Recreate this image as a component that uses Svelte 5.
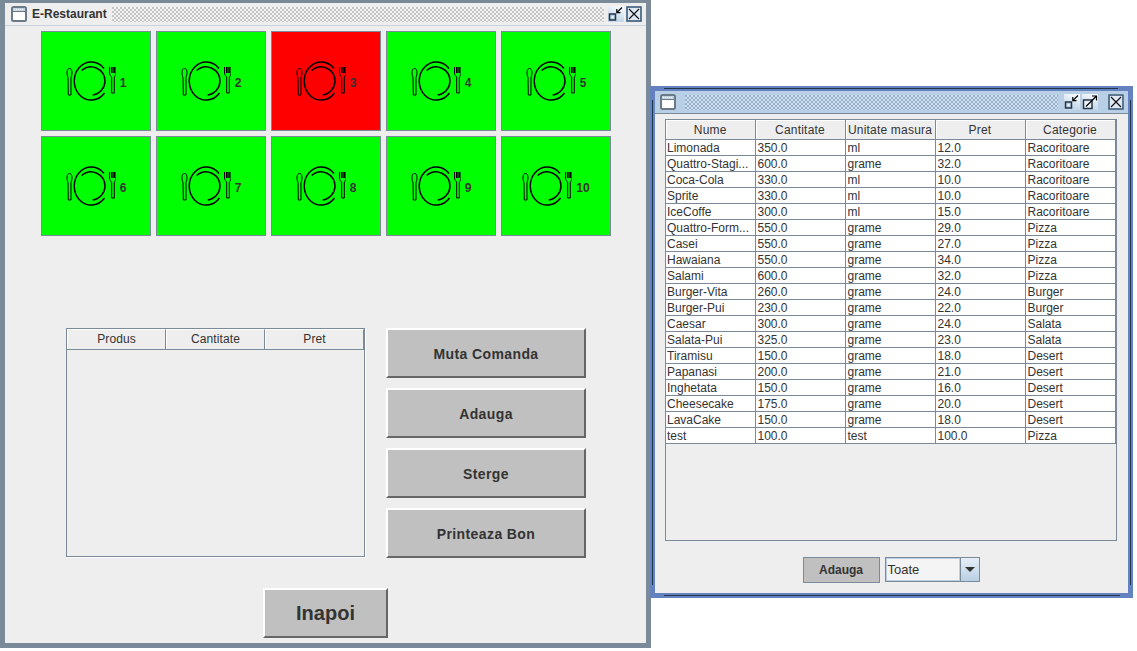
<script lang="ts">
  const tables = [1, 2, 3, 4, 5, 6, 7, 8, 9, 10];
  const busy = [3];
  const actions = ['Muta Comanda', 'Adauga', 'Sterge', 'Printeaza Bon'];
  const columns = ['Nume', 'Cantitate', 'Unitate masura', 'Pret', 'Categorie'];
  const products = [
    ['Limonada', '350.0', 'ml', '12.0', 'Racoritoare'],
    ['Quattro-Stagi...', '600.0', 'grame', '32.0', 'Racoritoare'],
    ['Coca-Cola', '330.0', 'ml', '10.0', 'Racoritoare'],
    ['Sprite', '330.0', 'ml', '10.0', 'Racoritoare'],
    ['IceCoffe', '300.0', 'ml', '15.0', 'Racoritoare'],
    ['Quattro-Form...', '550.0', 'grame', '29.0', 'Pizza'],
    ['Casei', '550.0', 'grame', '27.0', 'Pizza'],
    ['Hawaiana', '550.0', 'grame', '34.0', 'Pizza'],
    ['Salami', '600.0', 'grame', '32.0', 'Pizza'],
    ['Burger-Vita', '260.0', 'grame', '24.0', 'Burger'],
    ['Burger-Pui', '230.0', 'grame', '22.0', 'Burger'],
    ['Caesar', '300.0', 'grame', '24.0', 'Salata'],
    ['Salata-Pui', '325.0', 'grame', '23.0', 'Salata'],
    ['Tiramisu', '150.0', 'grame', '18.0', 'Desert'],
    ['Papanasi', '200.0', 'grame', '21.0', 'Desert'],
    ['Inghetata', '150.0', 'grame', '16.0', 'Desert'],
    ['Cheesecake', '175.0', 'grame', '20.0', 'Desert'],
    ['LavaCake', '150.0', 'grame', '18.0', 'Desert'],
    ['test', '100.0', 'test', '100.0', 'Pizza']
  ];
</script>

{#snippet frameIcon()}
  <svg class="frame-icon" width="16" height="16" viewBox="0 0 16 16">
    <rect x="1" y="1" width="14" height="14" rx="1.5" fill="#fff" stroke="#6b7a89" stroke-width="2" />
    <rect x="2" y="2" width="12" height="3" fill="#c4d3e2" />
    <path d="M3 3.5h1M5 3.5h1M7 3.5h1M9 3.5h1M11 3.5h1" stroke="#fff" stroke-width="1" />
    <path d="M2 5.5h12" stroke="#6b7a89" stroke-width="1" />
  </svg>
{/snippet}

{#snippet iconify()}
  <svg class="ctl" width="16" height="16" viewBox="0 0 16 16">
    <rect x="1.5" y="8" width="6" height="6" fill="#b8cfe5" stroke="#22364a" stroke-width="1.5" />
    <rect x="3.5" y="10" width="2" height="2" fill="#eef3f8" />
    <path d="M14 1.5 8.8 6.7M8.8 3v3.7h3.7" fill="none" stroke="#000" stroke-width="1.2" />
  </svg>
{/snippet}

{#snippet maximize()}
  <svg class="ctl" width="16" height="16" viewBox="0 0 16 16">
    <rect x="1.5" y="6" width="8.5" height="8.5" fill="#eef3f8" stroke="#22364a" stroke-width="1.5" />
    <path d="M4 12.5 14 2.5M10 2h4.5v4.5" fill="none" stroke="#000" stroke-width="1.2" />
  </svg>
{/snippet}

{#snippet closeBtn()}
  <svg class="ctl" width="16" height="16" viewBox="0 0 16 16">
    <rect x="1" y="1" width="14" height="14" fill="#dfe9f3" stroke="#3d5a78" stroke-width="1.6" />
    <path d="M3 3 13 13M13 3 3 13" stroke="#111" stroke-width="1.2" />
  </svg>
{/snippet}

<div class="desk">
  <section class="window main-win">
    <header class="title-bar">
      {@render frameIcon()}
      <span class="title">E-Restaurant</span>
      <span class="bumps"></span>
      <span class="controls">
        {@render iconify()}
        {@render closeBtn()}
      </span>
    </header>

    <div class="body">
      <div class="tiles">
        {#each tables as n}
          <div class="tile" class:busy={busy.includes(n)}>
            <svg width="50" height="40" viewBox="0 0 50 40" fill="none" stroke="#000">
              <path d="M38 7.5A17 19 0 1 0 38.500 32" stroke-width="1.5" />
              <path d="M15.700 9.500A14 14.300 0 0 1 39 20.500A14 14.300 0 0 1 26.700 34" stroke-width="1.5" />
              <path d="M1 12C1 8.500 2 7.500 3.500 7.500S6 8.500 6 12C6 14.500 5.200 15.700 5 16.500L5 34H2.300L2 16.500C1.800 15.700 1 14.500 1 12Z" stroke-width="1" />
              <path d="M43.500 6V12C43.500 14 45 15 45.700 16L45.700 32H48.300L48.300 16C49 15 50 14 50 12V6" stroke-width="1" />
              <path d="M45.500 6V12M47 6V12M48.500 6V12" stroke-width="1.200" />
            </svg>
            <span class="tile-no">{n}</span>
          </div>
        {/each}
      </div>

      <div class="order">
        <div class="order-table">
          <div class="order-head">
            <span>Produs</span>
            <span>Cantitate</span>
            <span>Pret</span>
          </div>
        </div>
        <div class="actions">
          {#each actions as label}
            <button class="bevel action">{label}</button>
          {/each}
        </div>
      </div>

      <button class="bevel back">Inapoi</button>
    </div>
  </section>

  <section class="window menu-win">
    <span class="edge edge-left"></span>
    <span class="edge edge-right"></span>
    <header class="title-bar">
      {@render frameIcon()}
      <span class="bumps"></span>
      <span class="controls">
        {@render iconify()}
        {@render maximize()}
        <span class="spacer"></span>
        {@render closeBtn()}
      </span>
    </header>

    <div class="body">
      <div class="grid-box">
        <table>
          <thead>
            <tr>
              {#each columns as col}
                <th>{col}</th>
              {/each}
            </tr>
          </thead>
          <tbody>
            {#each products as row}
              <tr>
                {#each row as cell}
                  <td>{cell}</td>
                {/each}
              </tr>
            {/each}
          </tbody>
        </table>
      </div>

      <div class="filter-row">
        <button class="small-btn">Adauga</button>
        <div class="combo">
          <span class="combo-value">Toate</span>
          <span class="combo-arrow"></span>
        </div>
      </div>
    </div>
  </section>
</div>

<style>
  :global(body) {
    background: #fff;
    font-family: "Liberation Sans", Arial, sans-serif;
    color: #333;
  }

  .desk {
    position: relative;
    width: 1137px;
    height: 651px;
    overflow: hidden;
  }

  .window {
    position: absolute;
    box-sizing: border-box;
    display: flex;
    flex-direction: column;
    background: #eee;
  }

  .main-win {
    left: 0;
    top: 0;
    width: 651px;
    height: 648px;
    border: solid #7a8a99;
    border-width: 3px 5px 5px 5px;
  }

  .menu-win {
    left: 650px;
    top: 86px;
    width: 483px;
    height: 512px;
    border: 5px solid #6382bf;
  }

  .menu-win::before,
  .menu-win::after,
  .edge {
    content: "";
    position: absolute;
    background: #22364a;
  }

  .menu-win::before {
    left: 9px;
    right: 10px;
    top: -3px;
    height: 1px;
  }

  .menu-win::after {
    left: 9px;
    right: 8px;
    bottom: -3px;
    height: 1px;
  }

  .edge {
    top: 9px;
    bottom: 8px;
    width: 1px;
  }

  .edge-left {
    left: -3px;
  }

  .edge-right {
    right: -3px;
  }

  .title-bar {
    height: 23px;
    flex: none;
    box-sizing: border-box;
    display: flex;
    align-items: center;
    padding: 0 4px 0 6px;
    background: #eee;
    border-bottom: 1px solid #c8d3df;
  }

  .menu-win .title-bar {
    background: #b8cfe5;
    border-bottom-color: #7a8a99;
  }

  .title {
    margin-left: 5px;
    margin-right: 5px;
    font-size: 12px;
    font-weight: bold;
    white-space: nowrap;
  }

  .bumps {
    flex: 1;
    height: 15px;
    margin-right: 4px;
    background-color: #f4f4f4;
    background-image:
      radial-gradient(circle at 1px 1px, #c4c4c4 0.9px, transparent 1px),
      radial-gradient(circle at 3px 3px, #c4c4c4 0.9px, transparent 1px);
    background-size: 4px 4px;
  }

  .menu-win .bumps {
    margin-left: 9px;
    margin-right: 6px;
    background-color: #d3e0ed;
    background-image:
      radial-gradient(circle at 1px 1px, #94b0cc 0.9px, transparent 1px),
      radial-gradient(circle at 3px 3px, #94b0cc 0.9px, transparent 1px);
    background-size: 4px 4px;
  }

  .controls {
    display: flex;
    align-items: center;
    gap: 2px;
    flex: none;
  }

  .spacer {
    width: 6px;
  }

  .frame-icon,
  .ctl {
    display: block;
    flex: none;
  }

  .ctl {
    background: linear-gradient(200deg, #fff, #c4d8ea 75%);
  }

  .menu-win .frame-icon {
    margin-left: -1px;
  }

  .main-win .body {
    flex: 1;
    display: flex;
    flex-direction: column;
    align-items: flex-start;
    padding: 5px 0 0 36px;
  }

  .tiles {
    display: grid;
    grid-template-columns: repeat(5, 110px);
    grid-auto-rows: 100px;
    gap: 5px;
  }

  .tile {
    box-sizing: border-box;
    display: flex;
    align-items: center;
    justify-content: center;
    gap: 4px;
    background: #0f0;
    border: 1px solid #7a8a99;
    font-size: 12px;
    font-weight: bold;
  }

  .tile.busy {
    background: #f00;
  }

  .tile svg {
    display: block;
  }

  .tile-no {
    padding-top: 3px;
  }

  .order {
    display: flex;
    align-items: flex-start;
    gap: 21px;
    margin: 92px 0 0 25px;
  }

  .order-table {
    box-sizing: border-box;
    width: 299px;
    height: 229px;
    border: 1px solid #7a8a99;
    box-shadow: 1px 1px 0 #fff;
  }

  .order-head {
    display: grid;
    grid-template-columns: repeat(3, 1fr);
    height: 21px;
    box-sizing: border-box;
    border-bottom: 1px solid #7a8a99;
  }

  .order-head span {
    box-sizing: border-box;
    text-align: center;
    font-size: 12px;
    letter-spacing: 0.1px;
    border-left: 1px solid #fff;
    border-top: 1px solid #fff;
    border-right: 1px solid #7a8a99;
    line-height: 19px;
  }

  .actions {
    display: flex;
    flex-direction: column;
    gap: 10px;
  }

  .bevel {
    display: block;
    box-sizing: border-box;
    padding: 1px 0 0;
    background: #c0c0c0;
    border: 2px solid;
    border-color: #fff #666 #666 #fff;
    color: #333;
    font-family: inherit;
    font-weight: bold;
  }

  .action {
    width: 200px;
    height: 50px;
    font-size: 14px;
    letter-spacing: 0.4px;
  }

  .back {
    width: 125px;
    height: 50px;
    margin: 30px 0 0 222px;
    font-size: 20px;
  }

  .menu-win .body {
    flex: 1;
    display: flex;
    flex-direction: column;
    padding: 5px 11px 0 10px;
  }

  .grid-box {
    box-sizing: border-box;
    height: 422px;
    border: 1px solid #7a8a99;
  }

  table {
    border-collapse: collapse;
    table-layout: fixed;
    width: 449px;
    font-size: 12px;
  }

  th,
  td {
    box-sizing: border-box;
    width: 90px;
    padding: 0 2px;
    border: 1px solid #7a8a99;
    overflow: hidden;
    white-space: nowrap;
    font-weight: normal;
  }

  th:first-child {
    width: 89px;
  }

  th {
    height: 19px;
    padding-top: 1px;
    text-align: center;
    letter-spacing: 0.2px;
    border-top: none;
    border-left-color: #fff;
    box-shadow: inset 1px 1px 0 #fff;
  }

  th:first-child {
    border-left: none;
  }

  td {
    height: 16px;
    padding-top: 1px;
    line-height: 14px;
    background: #fff;
  }

  td:first-child {
    border-left: none;
    padding-left: 1px;
  }

  .filter-row {
    display: flex;
    align-items: flex-start;
    justify-content: center;
    gap: 5px;
    margin-top: 16px;
  }

  .small-btn {
    width: 77px;
    height: 26px;
    padding: 0;
    background: #c0c0c0;
    border: 1px solid #7a8a99;
    color: #333;
    font-family: inherit;
    font-size: 12px;
    font-weight: bold;
  }

  .combo {
    box-sizing: border-box;
    display: flex;
    width: 95px;
    height: 25px;
    border: 1px solid #7a8a99;
    font-size: 13px;
  }

  .combo-value {
    flex: 1;
    padding-left: 1px;
    line-height: 21px;
    background: #f4f4f4;
    border: 1px solid #b8cfe5;
  }

  .combo-arrow {
    position: relative;
    width: 18px;
    background: linear-gradient(#e6eef6, #b8cfe5);
    border-left: 1px solid #7a8a99;
  }

  .combo-arrow::after {
    content: "";
    position: absolute;
    left: 4px;
    top: 9px;
    border: 5px solid transparent;
    border-top-color: #333;
    border-bottom: none;
  }
</style>
